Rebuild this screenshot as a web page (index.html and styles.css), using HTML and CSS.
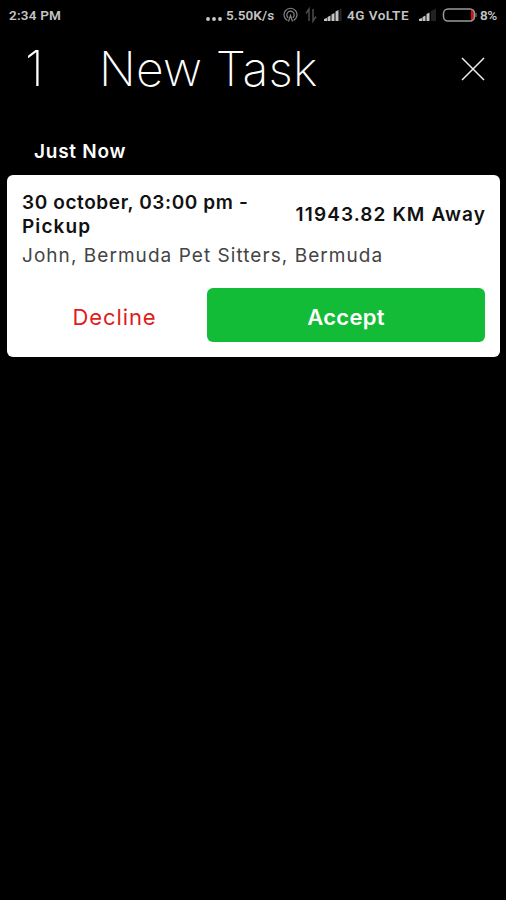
FILE: index.html
```html
<!DOCTYPE html>
<html lang="en">
<head>
<meta charset="utf-8">
<title>New Task</title>
<link rel="stylesheet" href="styles.css">
</head>
<body>
<div class="status">
  <span class="time">2:34 PM</span>
  <svg class="dots" width="16" height="20" viewBox="0 0 16 20" fill="#ccc"><circle cx="2" cy="14" r="1.900"/><circle cx="8" cy="14" r="1.900"/><circle cx="14" cy="14" r="1.900"/></svg>
  <span class="speed">5.50K/s</span>
  <svg class="hotspot" width="15" height="20" viewBox="0 0 15 20" fill="none" stroke="#858585" stroke-width="1.200"><path d="M4.500 15.500a6.500 6.500 0 1 1 6 0"/><path d="M5.200 12.700a3.700 3.700 0 1 1 4.600 0"/><path d="M5.500 16.500l2-6 2 6"/></svg>
  <svg class="data" width="12" height="20" viewBox="0 0 12 20" fill="none" stroke="#4c4c4c" stroke-width="1.500"><path d="M4 16V4L1 8.500M8 4v12l3-4.500"/></svg>
  <svg class="signal" width="18" height="20" viewBox="0 0 18 20"><path d="M0 16v-2l3-1v3zM3.500 16v-4l3-1.500V16zM7.500 16V9.500l3-1.500v8zM11.500 16V6.500l3-1.500v11z" fill="#c4c4c4"/><path d="M15.500 16V4.500l2-1V16z" fill="#282828"/></svg>
  <span class="network">4G VoLTE</span>
  <svg class="signal second" width="18" height="20" viewBox="0 0 18 20"><path d="M0 16v-2l3-1v3zM3.500 16v-4l3-1.500V16zM7.500 16V9l3-1.500V16z" fill="#c4c4c4"/><path d="M12 16V6l5-2.500V16z" fill="#222"/></svg>
  <svg class="battery" width="35" height="20" viewBox="0 0 35 20"><path d="M29 5h2q2 0 2 2v6q0 2-2 2h-2z" fill="#d01414"/><rect x="1.500" y="4" width="31" height="12" rx="4.500" fill="none" stroke="#9a9a9a" stroke-width="1.500"/><path d="M34 8v4" stroke="#999"/></svg>
  <span class="percent">8%</span>
</div>
<header class="header">
  <span class="count">1</span>
  <h1 class="title">New Task</h1>
  <svg class="close" width="24" height="24" viewBox="0 0 24 24"><path d="M1 1l22 22M23 1L1 23" stroke="#eee" stroke-width="1.500"/></svg>
</header>
<h2 class="group">Just Now</h2>
<main class="card">
  <div class="top">
    <div class="when"><span class="date">30 october, 03:00 pm -</span><br><span class="kind">Pickup</span></div>
    <div class="distance">11943.82 KM Away</div>
  </div>
  <div class="place">John, Bermuda Pet Sitters, Bermuda</div>
  <div class="actions">
    <button class="decline"><span>Decline</span></button>
    <button class="accept"><span>Accept</span></button>
  </div>
</main>
</body>
</html>
```
FILE: styles.css
```css
* { box-sizing: border-box; }
body {
  margin: 0;
  height: 900px;
  overflow: hidden;
  background: #000;
  color: #fff;
  font-family: Inter, sans-serif;
}
.status {
  display: flex;
  align-items: center;
  height: 30px;
  padding: 0 8px 0 9px;
  font: 600 13.5px/30px Roboto, sans-serif;
  color: #c4c4c4;
  white-space: nowrap;
}
.status svg { flex: none; }
.time { width: 197px; letter-spacing: 0.2px; }
.dots { margin-right: 4px; }
.speed { width: 57px; letter-spacing: 0.1px; }
.hotspot { margin-right: 7px; }
.data { margin-right: 7px; }
.signal { margin-right: 5px; }
.network { width: 72px; letter-spacing: 0.5px; }
.second { margin-right: 5px; }
.battery { margin-right: 3px; }
.percent { letter-spacing: -0.4px; }
.header {
  display: flex;
  align-items: center;
  height: 78px;
  padding: 0 21px 0 25px;
  font-size: 49px;
  line-height: 78px;
}
.count { width: 74px; font-weight: 200; }
.title {
  flex: 1;
  margin: 0;
  font-size: 48px;
  font-weight: 200;
  letter-spacing: 0.2px;
  white-space: nowrap;
}
.group {
  margin: 29px 0 0 34px;
  height: 38px;
  font-size: 19px;
  font-weight: 600;
  line-height: 29px;
  letter-spacing: 0.75px;
}
.card {
  width: 493px;
  height: 182px;
  margin-left: 7px;
  padding: 16px 15px 13px;
  border-radius: 6px;
  background: #fff;
  color: #111;
}
.top {
  display: flex;
  align-items: center;
  justify-content: space-between;
  height: 48px;
  font-size: 19px;
  font-weight: 600;
  line-height: 24px;
  white-space: nowrap;
}
.date { letter-spacing: 0.6px; }
.kind { letter-spacing: 1.1px; }
.distance { margin-right: -1px; letter-spacing: 1.1px; }
.place {
  height: 31px;
  font-size: 19px;
  line-height: 33px;
  letter-spacing: 1.05px;
  color: #444;
  white-space: nowrap;
}
.actions {
  display: grid;
  grid-template-columns: 185px 278px;
  height: 54px;
  margin-top: 18px;
}
button {
  border: 0;
  padding: 3px 0 0;
  background: none;
  font: 600 22px Inter, sans-serif;
}
.decline { color: #e01b1b; font-weight: 400; letter-spacing: 0.9px; }
.accept { border-radius: 6px; background: #12bc36; color: #fff; letter-spacing: 0.3px; }
```
